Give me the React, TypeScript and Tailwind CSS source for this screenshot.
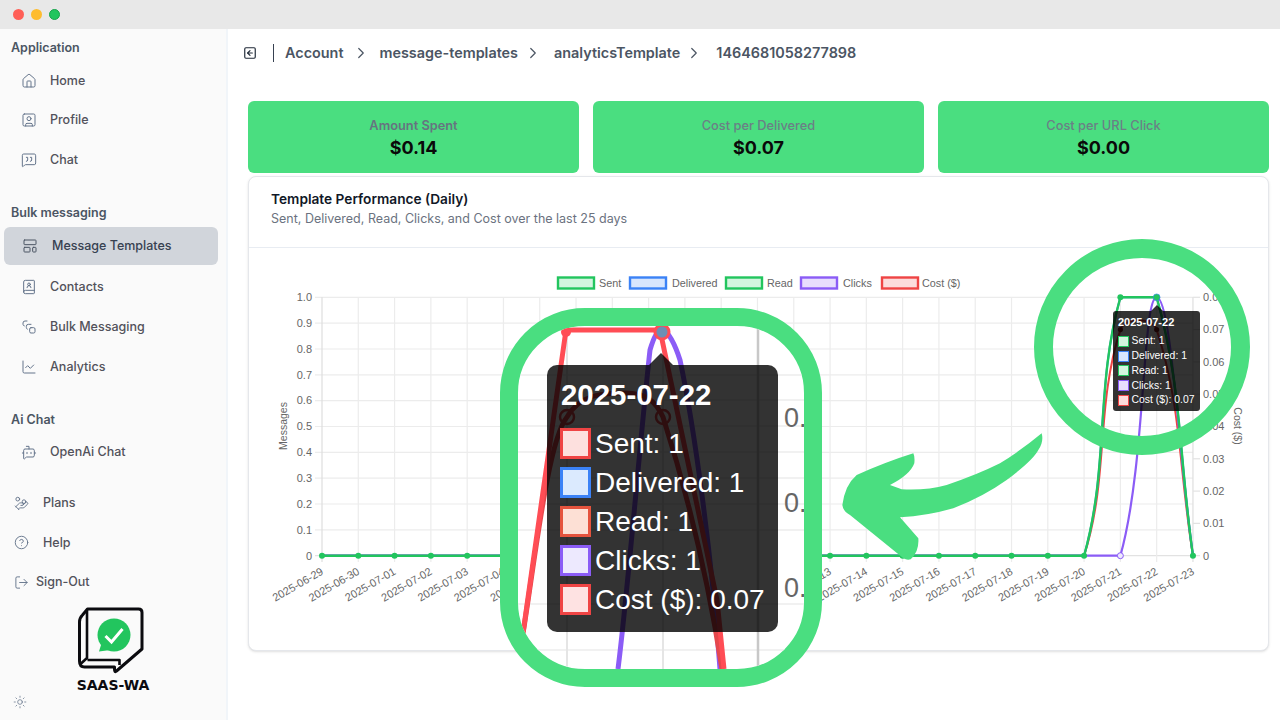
import React from "react";
import {
  House, SquareUser, MessageSquareQuote, LayoutTemplate, BookUser, ChartLine, BotMessageSquare,
  HandCoins, CircleHelp, LogOut, Sun, SquareArrowLeft, ChevronRight,
} from "lucide-react";

const X0 = 322;
const STEP = 36.29;
const Y0 = 555.7;
const Y1 = 297.3;
const H = Y0 - Y1;
const xs = Array.from({ length: 25 }, (_, i) => X0 + i * STEP);
const dates = [
  "2025-06-29", "2025-06-30", "2025-07-01", "2025-07-02", "2025-07-03", "2025-07-04", "2025-07-05", "2025-07-06",
  "2025-07-07", "2025-07-08", "2025-07-09", "2025-07-10", "2025-07-11", "2025-07-12", "2025-07-13", "2025-07-14",
  "2025-07-15", "2025-07-16", "2025-07-17", "2025-07-18", "2025-07-19", "2025-07-20", "2025-07-21", "2025-07-22", "2025-07-23",
];

function spline(values: number[]) {
  const pts = values.map((v, i) => ({ x: xs[i], y: Y0 - v * H }));
  const clamp = (y: number) => Math.min(Y0, Math.max(Y1, y));
  const t = 0.4;
  const cps = pts.map((c, i) => {
    const p = pts[i - 1] || c;
    const n = pts[i + 1] || c;
    const d01 = Math.hypot(c.x - p.x, c.y - p.y);
    const d12 = Math.hypot(n.x - c.x, n.y - c.y);
    const s = d01 + d12 || 1;
    const fa = (t * d01) / s;
    const fb = (t * d12) / s;
    return {
      px: c.x - fa * (n.x - p.x),
      py: clamp(c.y - fa * (n.y - p.y)),
      nx: c.x + fb * (n.x - p.x),
      ny: clamp(c.y + fb * (n.y - p.y)),
    };
  });
  let d = `M${pts[0].x} ${pts[0].y}`;
  for (let i = 1; i < pts.length; i++) {
    d += ` C${cps[i - 1].nx} ${cps[i - 1].ny} ${cps[i].px} ${cps[i].py} ${pts[i].x} ${pts[i].y}`;
  }
  return d;
}

const zeros = new Array(25).fill(0);
const withVals = (m: Record<number, number>) => zeros.map((v, i) => (m[i] !== undefined ? m[i] : v));
const sent = withVals({ 22: 1, 23: 1 });
const clicks = withVals({ 23: 1 });
const cost = withVals({ 22: 0.875, 23: 0.875 });

const legend = [
  { x: 557, tx: 599, label: "Sent", stroke: "#22c55e", fill: "#d3f5df" },
  { x: 629, tx: 672, label: "Delivered", stroke: "#3b82f6", fill: "#d8e6fd" },
  { x: 725, tx: 767, label: "Read", stroke: "#22c55e", fill: "#d3f5df" },
  { x: 800, tx: 843, label: "Clicks", stroke: "#8b5cf6", fill: "#e8defd" },
  { x: 881, tx: 922, label: "Cost ($)", stroke: "#ef4444", fill: "#fcdcdc" },
];

function Chart() {
  const yTicks = ["1.0", "0.9", "0.8", "0.7", "0.6", "0.5", "0.4", "0.3", "0.2", "0.1", "0"];
  const rTicks = ["0.08", "0.07", "0.06", "0.05", "0.04", "0.03", "0.02", "0.01", "0"];
  return (
    <svg viewBox="248 248 1021 403" className="block w-[1021px] h-[403px] font-['Liberation_Sans',sans-serif]">
      {legend.map((l) => (
        <g key={l.label}>
          <rect x={l.x + 1} y={277.5} width={36} height={11} fill={l.fill} stroke={l.stroke} strokeWidth={2.4} />
          <text x={l.tx} y={287} fontSize={10.8} fill="#666666">{l.label}</text>
        </g>
      ))}
      {yTicks.map((t, i) => {
        const y = Y1 + (i * H) / 10;
        return (
          <g key={t}>
            <line x1={315} x2={1193} y1={y} y2={y} stroke={i === 10 ? "#e2e2e2" : "#ececec"} strokeWidth={1.2} />
            <text x={312} y={y + 3.8} fontSize={11} textAnchor="end" fill="#666666">{t}</text>
          </g>
        );
      })}
      {xs.map((x, i) => (
        <line key={i} x1={x} x2={x} y1={Y1} y2={562} stroke={i === 0 || i === 24 ? "#dedede" : "#ececec"} strokeWidth={1.2} />
      ))}
      {rTicks.map((t, i) => {
        const y = Y1 + (i * H) / 8;
        return (
          <g key={t}>
            <line x1={1193} x2={1200} y1={y} y2={y} stroke="#e2e2e2" strokeWidth={1.2} />
            <text x={1203} y={y + 3.8} fontSize={11} fill="#666666">{t}</text>
          </g>
        );
      })}
      {dates.map((d, i) => (
        <text key={d} x={xs[i] + 1} y={574} fontSize={11} textAnchor="end" fill="#666666" transform={`rotate(-30 ${xs[i] + 1} 572)`}>{d}</text>
      ))}
      <text x={287} y={426} fontSize={10.5} textAnchor="middle" fill="#666666" transform="rotate(-90 287 426)">Messages</text>
      <text x={1234} y={426} fontSize={10.5} textAnchor="middle" fill="#666666" transform="rotate(90 1234 426)">Cost ($)</text>

      <path d={spline(cost)} fill="none" stroke="#ef4444" strokeWidth={2} />
      <path d={spline(clicks)} fill="none" stroke="#8b5cf6" strokeWidth={2.2} />
      <circle cx={xs[22]} cy={Y0} r={3} fill="#ede9fe" stroke="#8b5cf6" strokeWidth={1} />
      <path d={spline(sent)} fill="none" stroke="#3b82f6" strokeWidth={2} />
      <path d={spline(sent)} fill="none" stroke="#22c55e" strokeWidth={2.4} />
      {xs.map((x, i) =>
        i === 22 || i === 23 ? null : <circle key={i} cx={x} cy={Y0} r={3} fill="#22c55e" />,
      )}
      <circle cx={xs[22]} cy={Y1} r={3} fill="#22c55e" />
      <circle cx={xs[23]} cy={Y1} r={3.4} fill="#22c55e" stroke="#3b82f6" strokeWidth={0.6} />
      <circle cx={xs[22]} cy={Y0 - 0.875 * H} r={2.6} fill="#7f1d1d" />
      <circle cx={xs[23]} cy={Y0 - 0.875 * H} r={2.6} fill="#7f1d1d" />
    </svg>
  );
}

type IconType = React.ComponentType<{ size?: number; strokeWidth?: number; className?: string }>;

function LinkedBoxes({ size, strokeWidth, className }: { size?: number; strokeWidth?: number; className?: string }) {
  return (
    <svg width={size} height={size} viewBox="0 0 24 24" fill="none" stroke="currentColor" strokeWidth={strokeWidth} strokeLinecap="round" strokeLinejoin="round" className={className}>
      <path d="M9 3H6a3 3 0 0 0-3 3v2a2.5 2.5 0 0 0 2 2.4" />
      <path d="M15 8h-4a3 3 0 0 0-3 3v2a2.5 2.5 0 0 0 1.5 2.3" />
      <rect x="13" y="13" width="8" height="8" rx="2" />
    </svg>
  );
}

function NavItem({ icon: Icon, label, active, tall }: { icon: IconType; label: string; active?: boolean; tall?: boolean }) {
  if (active) {
    return (
      <div className="mx-[4px] mb-[2px] flex h-[38px] w-[214px] items-center gap-[14px] rounded-md bg-[#d1d5db] pl-[18px] text-[#374151]">
        <Icon size={16} strokeWidth={1.5} className="text-[#4b5563]" />
        <span className="text-[12.5px] font-medium leading-none">{label}</span>
      </div>
    );
  }
  return (
    <div className={`mx-[4px] flex w-[214px] items-center gap-[13px] pl-[17px] text-[#52525b] ${tall ? "h-[40px]" : "h-[39.6px]"}`}>
      <Icon size={16} strokeWidth={1.5} className="text-[#64748b]" />
      <span className="text-[12.5px] font-medium leading-none">{label}</span>
    </div>
  );
}

function FootItem({ icon: Icon, label, gap }: { icon: IconType; label: string; gap: string }) {
  return (
    <div className={`flex h-[39.6px] items-center pl-[14px] text-[#52525b] ${gap}`}>
      <Icon size={15} strokeWidth={1.5} className="text-[#64748b]" />
      <span className="text-[12.5px] font-medium leading-none">{label}</span>
    </div>
  );
}

function Heading({ children, className }: { children: React.ReactNode; className: string }) {
  return <div className={`flex h-[20px] items-center pl-[11px] text-[12.5px] font-semibold text-[#4b5563] ${className}`}>{children}</div>;
}

function Logo() {
  return (
    <div className="mt-[4px] flex flex-col items-center">
      <svg viewBox="78.5 606 70 70" className="block h-[70px] w-[70px]">
        <path d="M88 609H139Q142.5 609 142.5 612.5V649L117 671Q115 673 115 669V667H85Q80 667 80 661V622Q80 618 83 615L88 609Z" fill="none" stroke="#0b0b0f" strokeWidth={3} strokeLinejoin="round" />
        <path d="M87.5 610V658L81 664M88 660H120V665" fill="none" stroke="#0b0b0f" strokeWidth={2.6} strokeLinejoin="round" />
        <circle cx={114.5} cy={635} r={16.5} fill="#22c55e" />
        <path d="M99.5 651.5L103 640L111 650Z" fill="#22c55e" />
        <path d="M106 636L112 642L123 629" fill="none" stroke="#ffffff" strokeWidth={3} />
      </svg>
      <div className="mt-[2px] font-['DejaVu_Sans',sans-serif] text-[14px] font-bold leading-[14px] text-[#0b0b0f]">SAAS-WA</div>
    </div>
  );
}

const smallRows = [
  { t: "Sent: 1", c: "border-[#22c55e] bg-[#d3f5df]" },
  { t: "Delivered: 1", c: "border-[#3b82f6] bg-[#d8e6fd]" },
  { t: "Read: 1", c: "border-[#22c55e] bg-[#d3f5df]" },
  { t: "Clicks: 1", c: "border-[#8b5cf6] bg-[#e8defd]" },
  { t: "Cost ($): 0.07", c: "border-[#ef4444] bg-[#fcdcdc]" },
];
const bigRows = [
  { t: "Sent: 1", c: "border-[#ef4444] bg-[#fde0de]" },
  { t: "Delivered: 1", c: "border-[#3b82f6] bg-[#dbeafe]" },
  { t: "Read: 1", c: "border-[#e5533d] bg-[#fde0d5]" },
  { t: "Clicks: 1", c: "border-[#8b5cf6] bg-[#ede9fe]" },
  { t: "Cost ($): 0.07", c: "border-[#ef4444] bg-[#fee2e2]" },
];

function SmallTooltip() {
  return (
    <div className="absolute left-[1113px] top-[311px] h-[100px] w-[87px] rounded-[3px] bg-black/80 pl-[5px] pt-[4px] font-['Liberation_Sans',sans-serif] text-white">
      <div className="absolute left-[38px] top-[-6px] h-0 w-0 border-x-[6px] border-b-[6px] border-x-transparent border-b-black/80" />
      <div className="h-[14px] text-[11px] font-bold leading-[14px]">2025-07-22</div>
      <div className="mt-[5px] flex flex-col">
        {smallRows.map((r) => (
          <div key={r.t} className="flex h-[14.8px] items-center gap-[2.5px]">
            <div className={`h-[11px] w-[11px] border ${r.c}`} />
            <span className="whitespace-nowrap text-[10.4px] leading-none">{r.t}</span>
          </div>
        ))}
      </div>
    </div>
  );
}

function BigTooltip() {
  return (
    <div className="absolute left-[547px] top-[365px] h-[267px] w-[231px] rounded-[10px] bg-black/80 pl-[13px] pt-[13px] font-['Liberation_Sans',sans-serif] text-white">
      <div className="absolute left-[102px] top-[-12px] h-0 w-0 border-x-[12px] border-b-[12px] border-x-transparent border-b-black/80" />
      <div className="ml-[1px] h-[34px] text-[29.4px] font-bold leading-[34px]">2025-07-22</div>
      <div className="mt-[12px] flex flex-col">
        {bigRows.map((r) => (
          <div key={r.t} className="flex h-[39px] items-center gap-[4px]">
            <div className={`h-[31px] w-[31px] border-[3px] ${r.c}`} />
            <span className="whitespace-nowrap text-[28px] leading-none">{r.t}</span>
          </div>
        ))}
      </div>
    </div>
  );
}

function Inset() {
  return (
    <div className="absolute left-[500px] top-[308px] h-[379px] w-[322px] overflow-hidden rounded-[85px] border-[18px] border-[#4ade80] bg-white">
      <svg viewBox="518 326 286 343" className="block h-[343px] w-[286px] font-['Liberation_Sans',sans-serif]">
        {[375, 400, 426, 452, 478, 504, 530, 604, 650].map((y) => (
          <line key={y} x1={518} x2={804} y1={y} y2={y} stroke="#ececec" strokeWidth={1.5} />
        ))}
        <line x1={567} x2={567} y1={326} y2={669} stroke="#e5e5e5" strokeWidth={2} />
        <line x1={663} x2={663} y1={326} y2={669} stroke="#e5e5e5" strokeWidth={2} />
        <line x1={758} x2={758} y1={326} y2={669} stroke="#c8c8c8" strokeWidth={2.5} />
        {[417, 502, 587].map((y) => (
          <text key={y} x={784} y={y + 10} fontSize={27} fill="#666666">0.</text>
        ))}
        <path d="M618 669C628 590 640 440 650 350Q656 330 662 328Q672 335 680 360C695 430 712 560 720 669" fill="none" stroke="#8b5cf6" strokeWidth={5} />
        <path d="M522 640C535 560 548 440 567 417C580 395 600 393 625 393C645 393 655 400 663 417C680 470 705 560 722 669" fill="none" stroke="#e5484d" strokeWidth={5} />
        <path d="M522 640L566 330H660L717 600L724 669" fill="none" stroke="#ff4d55" strokeWidth={5} strokeLinejoin="round" />
        <circle cx={567} cy={417} r={7} fill="none" stroke="#e5484d" strokeWidth={2.5} />
        <circle cx={663} cy={417} r={7} fill="none" stroke="#e5484d" strokeWidth={2.5} />
        <circle cx={566} cy={332} r={5} fill="#ff4d55" />
        <circle cx={662} cy={332} r={7} fill="#6b8fb5" stroke="#ff4d55" strokeWidth={3} />
      </svg>
    </div>
  );
}

function Stat({ label, value, strong }: { label: string; value: string; strong?: boolean }) {
  return (
    <div className="flex h-[72px] flex-col items-center justify-center rounded-md bg-[#4ade80]">
      <div className={`mt-[2px] text-[12.8px] leading-[20px] ${strong ? "font-semibold text-[#667480]" : "font-medium text-[#6b8086]"}`}>{label}</div>
      <div className="text-[18px] font-bold leading-[24px] text-[#0a0a0a]">{value}</div>
    </div>
  );
}

export default function App() {
  return (
    <div className="relative flex h-[720px] w-[1280px] flex-col overflow-hidden bg-white font-['Inter',sans-serif]">
      <div className="flex h-[29px] shrink-0 items-center gap-[7px] bg-[#e8e8e8] pl-[12.5px]">
        <div className="h-[11px] w-[11px] rounded-full bg-[#ff5f57]" />
        <div className="h-[11px] w-[11px] rounded-full bg-[#febc2e]" />
        <div className="h-[11px] w-[11px] rounded-full border border-[#16a34a] bg-[#22c55e]" />
      </div>
      <div className="flex min-h-0 flex-1">
        <aside className="flex w-[228px] shrink-0 flex-col border-r-2 border-[#f1f5f9] bg-[#fafafa] pt-[9px]">
          <Heading className="mb-[3px]">Application</Heading>
          <NavItem icon={House} label="Home" />
          <NavItem icon={SquareUser} label="Profile" />
          <NavItem icon={MessageSquareQuote} label="Chat" />
          <Heading className="mt-[24px] mb-[3px]">Bulk messaging</Heading>
          <NavItem icon={LayoutTemplate} label="Message Templates" active />
          <NavItem icon={BookUser} label="Contacts" tall />
          <NavItem icon={LinkedBoxes} label="Bulk Messaging" tall />
          <NavItem icon={ChartLine} label="Analytics" tall />
          <Heading className="mt-[24px] mb-[2px]">Ai Chat</Heading>
          <NavItem icon={BotMessageSquare} label="OpenAi Chat" />
          <div className="mt-[11px]">
            <FootItem icon={HandCoins} label="Plans" gap="gap-[14px]" />
            <FootItem icon={CircleHelp} label="Help" gap="gap-[14px]" />
            <FootItem icon={LogOut} label="Sign-Out" gap="gap-[7px]" />
          </div>
          <Logo />
          <div className="mt-[3px] pl-[13px]">
            <Sun size={14} strokeWidth={1.3} className="text-[#64748b]" />
          </div>
        </aside>
        <main className="flex min-w-0 flex-1 flex-col pl-[20px] pr-[11px]">
          <div className="flex h-[47px] shrink-0 items-center text-[14.4px] font-semibold text-[#4b5563]">
            <SquareArrowLeft size={14} strokeWidth={2} className="ml-[-5px] text-[#1f2937]" />
            <div className="ml-[16px] mr-[11px] h-[18px] w-px bg-[#374151]" />
            <span>Account</span>
            <ChevronRight size={18} strokeWidth={1.6} className="ml-[9px] mr-[9px]" />
            <span>message-templates</span>
            <ChevronRight size={18} strokeWidth={1.6} className="ml-[6px] mr-[12px]" />
            <span>analyticsTemplate</span>
            <ChevronRight size={18} strokeWidth={1.6} className="ml-[5px] mr-[13px]" />
            <span>1464681058277898</span>
          </div>
          <div className="mt-[25px] grid shrink-0 grid-cols-3 gap-[14px]">
            <Stat label="Amount Spent" value="$0.14" strong />
            <Stat label="Cost per Delivered" value="$0.07" />
            <Stat label="Cost per URL Click" value="$0.00" />
          </div>
          <div className="mt-[3px] h-[475px] shrink-0 overflow-hidden rounded-lg border border-[#e5e7eb] bg-white shadow-sm">
            <div className="flex h-[71px] flex-col border-b border-[#e8ecf2] pl-[22px] pt-[12px]">
              <div className="text-[13.7px] font-semibold leading-[20px] text-[#111827]">Template Performance (Daily)</div>
              <div className="text-[12.5px] leading-[20px] text-[#6b7280]">Sent, Delivered, Read, Clicks, and Cost over the last 25 days</div>
            </div>
            <div className="-ml-px">
              <Chart />
            </div>
          </div>
        </main>
      </div>

      <SmallTooltip />
      <Inset />
      <BigTooltip />
      <svg viewBox="0 0 216 216" className="absolute left-[1034px] top-[239px] h-[216px] w-[216px]">
        <circle cx={108} cy={108} r={98.5} fill="none" stroke="#4ade80" strokeWidth={19} />
      </svg>
      <svg viewBox="60 0 620 400" className="absolute left-[840px] top-[430px] h-[133.33px] w-[206.67px]">
        <path
          d="M665 10Q605 60 540 100Q470 135 380 165Q320 182 245 178L210 165Q270 135 283 100Q285 80 280 70Q200 95 110 135Q75 165 67 225Q70 245 90 255L250 385Q262 392 272 388Q298 365 295 325L240 262Q320 258 400 235Q490 200 560 150Q640 90 655 60Q672 35 665 10Z"
          fill="#4ade80"
        />
      </svg>
    </div>
  );
}
